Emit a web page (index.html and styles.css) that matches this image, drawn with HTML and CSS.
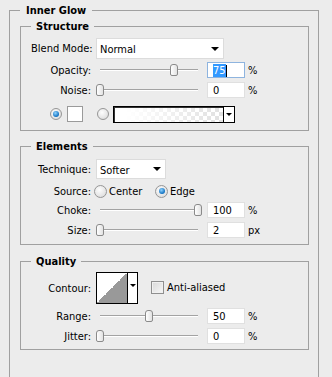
FILE: index.html
```html
<!DOCTYPE html>
<html lang="en">
<head>
    <meta charset="UTF-8">
    <title>Inner Glow</title>
    <link rel="stylesheet" href="styles.css">
</head>
<body>
    <fieldset class="group outer">
        <legend>Inner Glow</legend>

        <fieldset class="group structure">
            <legend>Structure</legend>
            <div class="row row-select">
                <span class="lbl">Blend Mode:</span>
                <div class="select blend">Normal<span class="caret"></span></div>
            </div>
            <div class="row row-num first">
                <span class="lbl">Opacity:</span>
                <div class="slider"><div class="rail"><span class="thumb" style="left: 75%"></span></div></div>
                <div class="num focus"><span class="sel">75</span><span class="cursor"></span></div>
                <span class="unit">%</span>
            </div>
            <div class="row row-num">
                <span class="lbl">Noise:</span>
                <div class="slider"><div class="rail"><span class="thumb" style="left: 0%"></span></div></div>
                <div class="num">0</div>
                <span class="unit">%</span>
            </div>
            <div class="row row-color">
                <span class="radio on"></span>
                <span class="swatch"></span>
                <span class="radio second"></span>
                <div class="gradient">
                    <span class="fill"></span>
                    <span class="drop"><span class="caret small"></span></span>
                </div>
            </div>
        </fieldset>

        <fieldset class="group elements">
            <legend>Elements</legend>
            <div class="row row-select">
                <span class="lbl">Technique:</span>
                <div class="select technique">Softer<span class="caret"></span></div>
            </div>
            <div class="row row-source">
                <span class="lbl">Source:</span>
                <label class="opt center"><span class="radio"></span>Center</label>
                <label class="opt"><span class="radio on"></span>Edge</label>
            </div>
            <div class="row row-num first">
                <span class="lbl">Choke:</span>
                <div class="slider"><div class="rail"><span class="thumb" style="left: 100%"></span></div></div>
                <div class="num">100</div>
                <span class="unit">%</span>
            </div>
            <div class="row row-num">
                <span class="lbl">Size:</span>
                <div class="slider"><div class="rail"><span class="thumb" style="left: 0%"></span></div></div>
                <div class="num">2</div>
                <span class="unit">px</span>
            </div>
        </fieldset>

        <fieldset class="group quality">
            <legend>Quality</legend>
            <div class="row row-contour">
                <span class="lbl">Contour:</span>
                <div class="contour">
                    <span class="curve"></span>
                    <span class="drop"><span class="caret small"></span></span>
                </div>
                <label class="check"><span class="box"></span>Anti-aliased</label>
            </div>
            <div class="row row-num">
                <span class="lbl">Range:</span>
                <div class="slider"><div class="rail"><span class="thumb" style="left: 50%"></span></div></div>
                <div class="num">50</div>
                <span class="unit">%</span>
            </div>
            <div class="row row-num">
                <span class="lbl">Jitter:</span>
                <div class="slider"><div class="rail"><span class="thumb" style="left: 0%"></span></div></div>
                <div class="num">0</div>
                <span class="unit">%</span>
            </div>
        </fieldset>
    </fieldset>
</body>
</html>
```

FILE: styles.css
```css
html, body {
    margin: 0;
    padding: 0;
    background: #ececec;
    overflow: hidden;
}

body {
    font-family: "DejaVu Sans Condensed", "Liberation Sans", sans-serif;
    font-size: 11px;
    color: #000;
}

/* group boxes */
.group {
    margin: 0;
    min-width: 0;
    border: 1px solid #a0a0a0;
    padding: 0 9px 0 10px;
}

.group legend {
    font-weight: bold;
    line-height: 13px;
    padding: 0 5px;
}

.outer {
    width: 310px;
    box-sizing: border-box;
    margin: 4px 0 0 9px;
    padding-top: 3px;
    padding-bottom: 60px;
}

.outer > legend {
    padding: 0 6px;
}

.structure {
    padding-bottom: 8px;
}

.elements {
    margin-top: 9px;
    padding-bottom: 6px;
}

.quality {
    margin-top: 10px;
    padding-bottom: 5px;
}

/* rows */
.row {
    display: flex;
    align-items: center;
    height: 16px;
    margin-top: 4px;
}

.row-select {
    height: 21px;
    margin-top: 5px;
}

.elements .row-select {
    height: 20px;
    margin-top: 6px;
}

.row-num.first {
    margin-top: 3px;
}

.row-color {
    margin-top: 8px;
}

.row-contour {
    height: 32px;
    margin-top: 4px;
}

.lbl {
    width: 60px;
    margin-right: 5px;
    text-align: right;
    flex-shrink: 0;
    white-space: nowrap;
}

/* dropdowns */
.select {
    box-sizing: border-box;
    height: 100%;
    display: flex;
    align-items: center;
    justify-content: space-between;
    padding: 2px 4px 0 3px;
    background: #fff;
    border: 1px solid #dcdcdc;
}

.select.blend {
    width: 128px;
}

.select.technique {
    width: 70px;
}

.caret {
    width: 0;
    height: 0;
    border-left: 4px solid transparent;
    border-right: 4px solid transparent;
    border-top: 4px solid #000;
    margin-top: -2px;
}

.caret.small {
    border-left-width: 3px;
    border-right-width: 3px;
    border-top-width: 3px;
    margin-top: 0;
}

/* sliders */
.slider {
    width: 106px;
    height: 100%;
    display: flex;
    align-items: center;
    flex-shrink: 0;
}

.rail {
    position: relative;
    flex: 1;
    margin: 0 4px;
    height: 1px;
    background: #a3a3a3;
    border-bottom: 1px solid #fff;
}

.thumb {
    position: absolute;
    top: 50%;
    width: 8px;
    height: 12px;
    box-sizing: border-box;
    transform: translate(-50%, -50%);
    border: 1px solid #8a8a8a;
    border-radius: 3px 3px 2px 2px;
    background: linear-gradient(to right, #fff, #e2e2e2);
}

/* number fields */
.num {
    box-sizing: border-box;
    width: 38px;
    height: 16px;
    margin-left: 5px;
    padding: 1px 0 0 5px;
    background: #fff;
    border: 1px solid #e0e0e0;
    line-height: 13px;
    display: flex;
    align-items: center;
}

.num.focus {
    border-color: #8eb4df;
}

.sel {
    background: #3399ff;
    color: #fff;
}

.cursor {
    width: 1px;
    height: 12px;
    background: #000;
}

.unit {
    margin-left: 3px;
}

/* radios and checks */
.radio {
    position: relative;
    width: 12px;
    height: 12px;
    box-sizing: border-box;
    border-radius: 50%;
    border: 1px solid #969696;
    background: radial-gradient(circle at 40% 35%, #fdfdfd, #d6d6d6);
    flex-shrink: 0;
}

.radio.on::after {
    content: "";
    position: absolute;
    left: 2px;
    top: 2px;
    width: 6px;
    height: 6px;
    border-radius: 50%;
    background: radial-gradient(circle at 40% 35%, #8fd3ff, #0f6fbf 70%);
}

.row-color .radio.on {
    margin-left: 19px;
}

.swatch {
    width: 16px;
    height: 16px;
    box-sizing: border-box;
    margin-left: 5px;
    background: #fff;
    border: 1px solid #9a9a9a;
}

.radio.second {
    margin-left: 14px;
}

.gradient {
    display: flex;
    box-sizing: border-box;
    width: 122px;
    height: 17px;
    margin-left: 4px;
    border: 1px solid #000;
    box-shadow: inset 1px 1px 0 #333;
}

.gradient .fill {
    flex: 1;
    margin: 1px 0 0 1px;
    background:
        linear-gradient(to right, #fff 10%, rgba(255, 255, 255, 0.35)),
        repeating-conic-gradient(#d0d0d0 0 25%, #fff 0 50%) 0 0 / 8px 8px;
}

.drop {
    width: 10px;
    display: flex;
    align-items: center;
    justify-content: center;
    background: #fff;
    border-left: 1px solid #000;
}

.opt {
    display: flex;
    align-items: center;
    gap: 2px;
}

.opt .radio {
    width: 13px;
    height: 13px;
}

.opt .radio.on::after {
    left: 2.5px;
    top: 2.5px;
}

.opt.center {
    width: 61px;
    margin-left: -2px;
}

/* contour */
.contour {
    display: flex;
    box-sizing: border-box;
    width: 42px;
    height: 32px;
    border: 1px solid #000;
}

.curve {
    width: 30px;
    background: linear-gradient(to bottom right, #fff 50%, #999 50%);
}

.contour .drop {
    flex: 1;
    align-items: flex-start;
    padding-top: 11px;
}

.check {
    display: flex;
    align-items: center;
    margin-left: 13px;
    margin-top: -2px;
}

.check .box {
    width: 13px;
    height: 13px;
    box-sizing: border-box;
    margin-right: 3px;
    border: 1px solid #8f8f8f;
    background: linear-gradient(135deg, #d8d8d8, #f7f7f7);
    box-shadow: inset 0 0 0 1px #f0f0f0;
}
```
